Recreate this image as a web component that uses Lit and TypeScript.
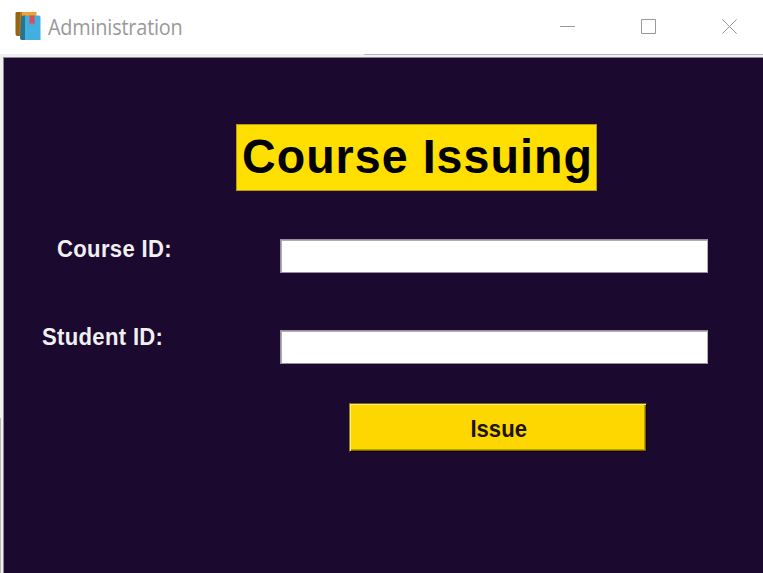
import { LitElement, html, css } from "lit";
import { customElement, property } from "lit/decorators.js";

@customElement("title-bar")
class TitleBar extends LitElement {
  @property() heading = "";

  static styles = css`
    :host { display: flex; height: 54px; align-items: flex-start; background: #fff; }
    .book { width: 26px; height: 29px; margin: 12px 0 0 15px; }
    .name {
      flex: 1;
      margin-left: 7px;
      font: 400 21px/28px "Open Sans", "Noto Sans", sans-serif;
      letter-spacing: -0.2px;
      transform: scaleX(0.946);
      transform-origin: left;
      padding-top: 13px;
      color: #999;
    }
    .controls { display: flex; width: 223px; margin-top: 19px; }
    .controls svg { width: 15px; height: 15px; margin-left: 20px; margin-right: 46px; flex: none; fill: none; stroke: #999; }
    .controls svg.last { margin-right: 0; }
  `;

  render() {
    return html`
      <svg class="book" viewBox="0 0 26 29">
        <path d="M.5 1Q.5 0 2 0H6V24H2.500Q.5 24 .5 22Z" fill="#966313" />
        <path d="M5 0H21.500V8H5Z" fill="#f4a12c" />
        <path d="M5 0H7V24H4Z" fill="#b67718" />
        <path d="M8 3.500H24Q25.500 3.500 25.500 5V28H8Z" fill="#43afe0" />
        <path d="M6 6Q6 3.500 9 3.500H10V28H7Q5 28 5 26Z" fill="#28738e" />
        <path d="M14.500 3.500H19.500V13L17 10.500L14.500 13Z" fill="#dc4c54" />
      </svg>
      <div class="name">${this.heading}</div>
      <div class="controls">
        <svg viewBox="0 0 15 15"><path d="M0 7.500H15" /></svg>
        <svg viewBox="0 0 15 15"><path d="M.5.500H14.500V14.500H.5Z" /></svg>
        <svg class="last" viewBox="0 0 15 15"><path d="M.3.300L14.700 14.700M14.700.300L.3 14.700" /></svg>
      </div>
    `;
  }
}

@customElement("app-root")
class AppRoot extends LitElement {
  static styles = css`
    :host {
      display: flex;
      flex-direction: column;
      height: 573px;
      width: 763px;
      overflow: hidden;
      background: linear-gradient(#f0f0f0 0 418px, #b9b9b9 418px) 0 0 / 1px 100% no-repeat, #f0f0f0;
      font-family: "Liberation Sans", Arial, sans-serif;
      font-weight: 700;
    }
    .divider { height: 1px; flex: none; margin-left: 364px; background: #b9b5be; }
    .panel {
      box-sizing: border-box;
      flex: 1;
      margin: 2px 0 0 3px;
      border-top: 1px solid #8c8793;
      border-left: 1px solid #8c8793;
      background: #1c0930;
      display: flex;
      flex-direction: column;
      align-items: flex-start;
    }
    .banner {
      box-sizing: border-box;
      width: 361px;
      height: 67px;
      margin: 66px 0 0 232px;
      padding-left: 5px;
      border: 1px solid #b39b18;
      background: #ffdf00;
      color: #000;
      font-size: 49px;
      line-height: 63px;
      white-space: nowrap;
    }
    .banner span {
      display: inline-block;
      letter-spacing: 1.1px;
      transform: scaleX(0.95);
      transform-origin: left;
    }
    .form {
      display: grid;
      grid-template-columns: 276px 428px;
      grid-template-rows: 34px 34px;
      row-gap: 57px;
      margin-top: 48px;
    }
    .label {
      color: #f0f0f0;
      font-size: 24px;
      line-height: 24px;
      letter-spacing: 0.35px;
      white-space: nowrap;
      transform: scaleX(0.92);
      transform-origin: left;
    }
    .course { margin: -2px 0 0 53px; }
    .student { margin: -5px 0 0 38px; }
    .field {
      box-sizing: border-box;
      width: 428px;
      height: 34px;
      margin: 0;
      padding: 2px 6px;
      border: 1px solid;
      border-color: #95909b #b5b0b9 #95909b #95909b;
      border-radius: 0;
      outline: none;
      background: #fff;
      box-shadow: inset 1px 1px #b0adb1;
      font: inherit;
    }
    .issue {
      box-sizing: border-box;
      width: 298px;
      height: 49px;
      margin: 39px 0 0 345px;
      padding: 3px 0 0 2px;
      border: 1px solid;
      border-color: #75662f #100600 #100600 #887933;
      border-radius: 0;
      background: #ffd700;
      box-shadow: inset 1px 1px #fff07a, inset -1px -1px #7a6500, inset -2px -2px #bd9f00;
      color: #1c1400;
      font: 700 24px/24px "Liberation Sans", Arial, sans-serif;
    }
    .issue span {
      display: inline-block;
      transform: scaleX(0.92);
    }
  `;

  render() {
    return html`
      <title-bar heading="Administration"></title-bar>
      <div class="divider"></div>
      <div class="panel">
        <div class="banner"><span>Course Issuing</span></div>
        <div class="form">
          <label class="label course" for="course">Course ID:</label>
          <input class="field" id="course" />
          <label class="label student" for="student">Student ID:</label>
          <input class="field" id="student" />
        </div>
        <button class="issue"><span>Issue</span></button>
      </div>
    `;
  }
}
